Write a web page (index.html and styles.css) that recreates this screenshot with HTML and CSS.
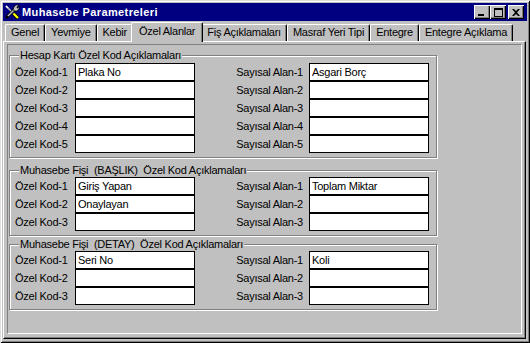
FILE: index.html
```html
<!DOCTYPE html>
<html>
<head>
    <title>Muhasebe Parametreleri</title>
    <link rel="stylesheet" href="styles.css">
</head>
<body>
    <div class="window">
        <div class="titlebar">
            <svg class="app-icon" width="16" height="16" viewBox="0 0 16 16">
                <!-- screwdriver: shaft to the top left, yellow handle bottom right -->
                <path d="M2 2 L9 9" stroke="#c0c0c0" stroke-width="1.6"/>
                <path d="M2 2 L4 4" stroke="#fff" stroke-width="1.6"/>
                <path d="M9.5 9.5 L14 14" stroke="#000" stroke-width="4"/>
                <path d="M9.5 9.5 L14 14" stroke="#ffff00" stroke-width="2.2"/>
                <!-- wrench: jaw top right, handle bottom left -->
                <path d="M3 13 L11 5" stroke="#000" stroke-width="3"/>
                <path d="M3 13 L11 5" stroke="#c0c0c0" stroke-width="1.4"/>
                <path d="M10 3 L12 1 L15 1 L13 3 L13 4 L14 4 L15 2 L15 5 L13 7 L11 7 L9 6 Z" fill="#c0c0c0" stroke="#000" stroke-width="0.7"/>
                <path d="M2 14 L4 12" stroke="#000" stroke-width="2.4"/>
            </svg>
            <span class="title">Muhasebe Parametreleri</span>
            <div class="controls">
                <button class="ctl">
                    <svg width="8" height="7" viewBox="0 0 8 7"><rect x="0" y="5" width="6" height="2" fill="#000"/></svg>
                </button>
                <button class="ctl">
                    <svg width="9" height="9" viewBox="0 0 9 9"><rect x="0.5" y="0.5" width="8" height="8" fill="none" stroke="#000"/><rect x="0" y="0" width="9" height="2" fill="#000"/></svg>
                </button>
                <button class="ctl ctl-close">
                    <svg width="8" height="7" viewBox="0 0 8 7"><path d="M0 0h2l2 2 2-2h2L5 3.5 8 7H6L4 5 2 7H0l3-3.5z" fill="#000"/></svg>
                </button>
            </div>
        </div>

        <div class="tabs">
            <div class="tab">Genel</div>
            <div class="tab">Yevmiye</div>
            <div class="tab">Kebir</div>
            <div class="tab active">Özel Alanlar</div>
            <div class="tab">Fiş Açıklamaları</div>
            <div class="tab">Masraf Yeri Tipi</div>
            <div class="tab">Entegre</div>
            <div class="tab">Entegre Açıklama</div>
        </div>

        <div class="page">
            <div class="panel">
                <fieldset class="group group-hesap">
                    <legend>Hesap Kartı Özel Kod Açıklamaları</legend>
                    <div class="rows">
                        <label>Özel Kod-1</label><input type="text" value="Plaka No">
                        <label class="right">Sayısal Alan-1</label><input type="text" value="Asgari Borç">
                        <label>Özel Kod-2</label><input type="text" value="">
                        <label class="right">Sayısal Alan-2</label><input type="text" value="">
                        <label>Özel Kod-3</label><input type="text" value="">
                        <label class="right">Sayısal Alan-3</label><input type="text" value="">
                        <label>Özel Kod-4</label><input type="text" value="">
                        <label class="right">Sayısal Alan-4</label><input type="text" value="">
                        <label>Özel Kod-5</label><input type="text" value="">
                        <label class="right">Sayısal Alan-5</label><input type="text" value="">
                    </div>
                </fieldset>

                <fieldset class="group group-baslik">
                    <legend>Muhasebe Fişi &nbsp;(BAŞLIK) &nbsp;Özel Kod Açıklamaları</legend>
                    <div class="rows">
                        <label>Özel Kod-1</label><input type="text" value="Giriş Yapan">
                        <label class="right">Sayısal Alan-1</label><input type="text" value="Toplam Miktar">
                        <label>Özel Kod-2</label><input type="text" value="Onaylayan">
                        <label class="right">Sayısal Alan-2</label><input type="text" value="">
                        <label>Özel Kod-3</label><input type="text" value="">
                        <label class="right">Sayısal Alan-3</label><input type="text" value="">
                    </div>
                </fieldset>

                <fieldset class="group group-detay">
                    <legend>Muhasebe Fişi &nbsp;(DETAY) &nbsp;Özel Kod Açıklamaları</legend>
                    <div class="rows">
                        <label>Özel Kod-1</label><input type="text" value="Seri No">
                        <label class="right">Sayısal Alan-1</label><input type="text" value="Koli">
                        <label>Özel Kod-2</label><input type="text" value="">
                        <label class="right">Sayısal Alan-2</label><input type="text" value="">
                        <label>Özel Kod-3</label><input type="text" value="">
                        <label class="right">Sayısal Alan-3</label><input type="text" value="">
                    </div>
                </fieldset>
            </div>
        </div>
    </div>
</body>
</html>
```

FILE: styles.css
```css
body {
    margin: 0;
    background: #c0c0c0;
    font-family: "Liberation Sans", Arial, sans-serif;
    font-size: 11px;
    letter-spacing: -0.25px;
    color: #000;
}

.window {
    width: 530px;
    height: 343px;
    box-sizing: border-box;
    padding: 3px 3px 4px 3px;
    background: #c0c0c0;
    box-shadow: inset 1px 1px #dfdfdf, inset -1px -1px #000,
                inset 2px 2px #fff, inset -2px -2px #808080;
    display: flex;
    flex-direction: column;
}

/* title bar */
.titlebar {
    height: 18px;
    background: #000080;
    display: flex;
    align-items: center;
    padding: 0 3px 0 1px;
}

.app-icon {
    flex: none;
}

.title {
    margin-left: 2px;
    color: #fff;
    font-weight: bold;
    letter-spacing: 0.4px;
    white-space: nowrap;
}

.controls {
    margin-left: auto;
    display: flex;
}

.ctl {
    width: 16px;
    height: 14px;
    padding: 0;
    border: none;
    background: #c0c0c0;
    box-shadow: inset 1px 1px #fff, inset -1px -1px #000, inset -2px -2px #808080;
    display: flex;
    align-items: center;
    justify-content: center;
}

.ctl-close {
    margin-left: 2px;
}

/* tabs */
.tabs {
    margin-top: 1px;
    height: 19px;
    display: flex;
    align-items: flex-end;
    padding-left: 2px;
    position: relative;
    z-index: 1;
}

.tab {
    height: 17px;
    box-sizing: border-box;
    padding: 0 5px;
    line-height: 15px;
    border-top: 1px solid #fff;
    border-left: 1px solid #fff;
    border-right: 1px solid #000;
    border-radius: 2px 2px 0 0;
    box-shadow: inset -1px 0 #808080;
    white-space: nowrap;
    background: #c0c0c0;
}

.tab.active {
    height: 20px;
    margin: 0 -2px -1px -2px;
    padding: 0 7px;
    line-height: 16px;
    position: relative;
}

/* tab page */
.page {
    flex: 1;
    width: 523px;
    box-sizing: border-box;
    padding: 2px 3px 4px 3px;
    border-top: 1px solid #fff;
    border-left: 1px solid #fff;
    border-right: 1px solid #000;
    border-bottom: 1px solid #000;
    box-shadow: inset -1px -1px #808080;
    display: flex;
}

.panel {
    flex: 1;
    border-top: 1px solid #808080;
    border-left: 1px solid #808080;
    border-right: 1px solid #fff;
    border-bottom: 1px solid #fff;
    padding: 4px 0 0 1px;
}

/* group boxes */
.group {
    width: 428px;
    box-sizing: border-box;
    margin: 0;
    padding: 0 7px 4px 5px;
    border: 1px solid #808080;
    box-shadow: inset 1px 1px #fff, 1px 1px #fff;
}

.group legend {
    margin-left: 4px;
    padding: 0 1px;
    line-height: 13px;
    background: #c0c0c0;
}

.group-hesap .rows {
    margin-top: 1px;
}

.group-baslik {
    margin-top: 6px;
}

.group-detay {
    margin-top: 2px;
}

.rows {
    display: grid;
    grid-template-columns: 60px 120px 1fr 120px;
    grid-auto-rows: 18px;
}

.rows label {
    line-height: 18px;
    white-space: nowrap;
}

.rows label.right {
    text-align: right;
    padding-right: 6px;
}

.rows input {
    height: 18px;
    box-sizing: border-box;
    margin: 0;
    padding: 0 2px;
    border: 1px solid #000;
    background: #fff;
    font: inherit;
    letter-spacing: inherit;
    color: #000;
    outline: none;
}
```
